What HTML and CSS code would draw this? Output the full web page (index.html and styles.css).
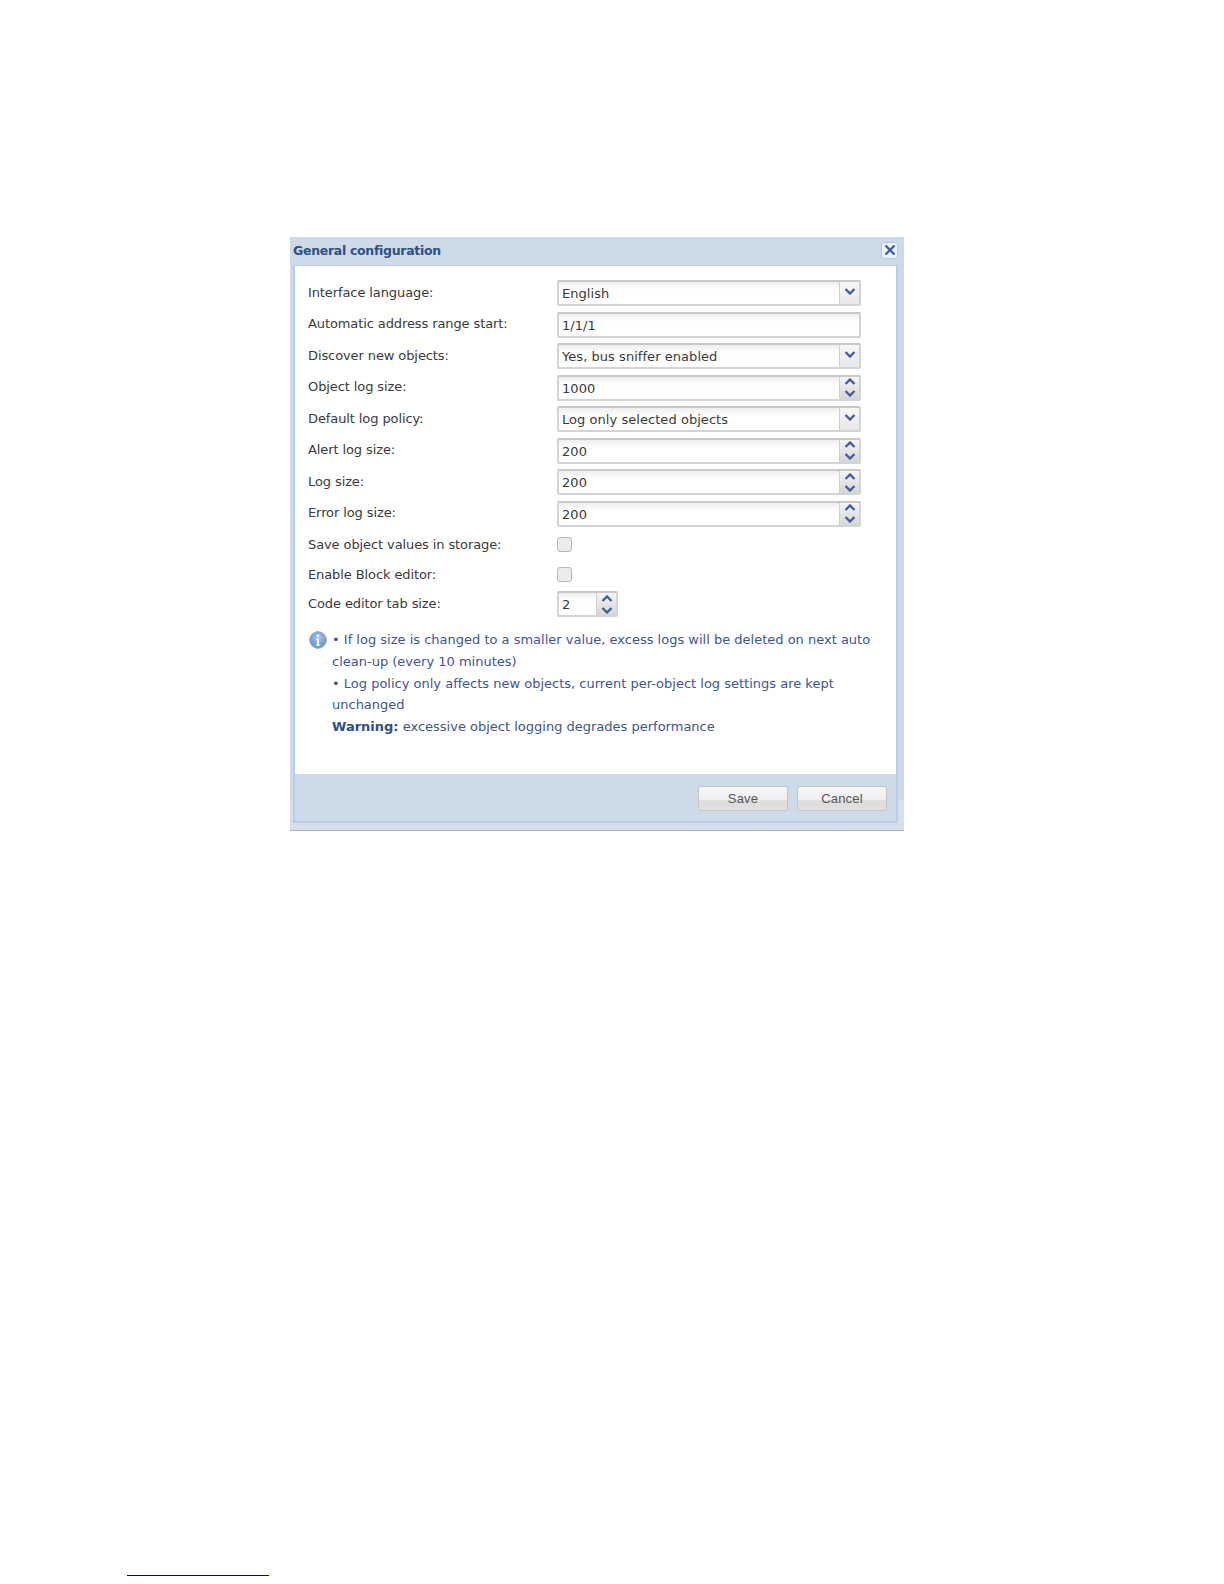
FILE: index.html
```html
<!DOCTYPE html>
<html lang="en">
<head>
    <meta charset="UTF-8">
    <title>General configuration</title>
    <link rel="stylesheet" href="styles.css">
</head>
<body>
    <div class="dialog">
        <div class="dialog-header">
            <span class="dialog-title">General configuration</span>
            <button class="close-btn">
                <svg width="12" height="12" viewBox="0 0 12 12"><path class="chev" d="M1.5 1.5L10.5 10.5M10.5 1.5L1.5 10.5"/></svg>
            </button>
        </div>
        <div class="dialog-inner">
            <div class="dialog-body">
                <div class="form-row">
                    <label>Interface language:</label>
                    <div class="field">
                        <span class="field-value">English</span>
                        <span class="trigger"><svg width="12" height="7" viewBox="0 0 12 7"><path class="chev" d="M1.5 1L6 5.5L10.5 1"/></svg></span>
                    </div>
                </div>
                <div class="form-row">
                    <label>Automatic address range start:</label>
                    <div class="field"><span class="field-value">1/1/1</span></div>
                </div>
                <div class="form-row">
                    <label>Discover new objects:</label>
                    <div class="field">
                        <span class="field-value">Yes, bus sniffer enabled</span>
                        <span class="trigger"><svg width="12" height="7" viewBox="0 0 12 7"><path class="chev" d="M1.5 1L6 5.5L10.5 1"/></svg></span>
                    </div>
                </div>
                <div class="form-row">
                    <label>Object log size:</label>
                    <div class="field">
                        <span class="field-value">1000</span>
                        <span class="spinner">
                            <svg width="12" height="7" viewBox="0 0 12 7"><path class="chev" d="M1.5 6L6 1.5L10.5 6"/></svg>
                            <svg width="12" height="7" viewBox="0 0 12 7"><path class="chev" d="M1.5 1L6 5.5L10.5 1"/></svg>
                        </span>
                    </div>
                </div>
                <div class="form-row">
                    <label>Default log policy:</label>
                    <div class="field">
                        <span class="field-value">Log only selected objects</span>
                        <span class="trigger"><svg width="12" height="7" viewBox="0 0 12 7"><path class="chev" d="M1.5 1L6 5.5L10.5 1"/></svg></span>
                    </div>
                </div>
                <div class="form-row">
                    <label>Alert log size:</label>
                    <div class="field">
                        <span class="field-value">200</span>
                        <span class="spinner">
                            <svg width="12" height="7" viewBox="0 0 12 7"><path class="chev" d="M1.5 6L6 1.5L10.5 6"/></svg>
                            <svg width="12" height="7" viewBox="0 0 12 7"><path class="chev" d="M1.5 1L6 5.5L10.5 1"/></svg>
                        </span>
                    </div>
                </div>
                <div class="form-row">
                    <label>Log size:</label>
                    <div class="field">
                        <span class="field-value">200</span>
                        <span class="spinner">
                            <svg width="12" height="7" viewBox="0 0 12 7"><path class="chev" d="M1.5 6L6 1.5L10.5 6"/></svg>
                            <svg width="12" height="7" viewBox="0 0 12 7"><path class="chev" d="M1.5 1L6 5.5L10.5 1"/></svg>
                        </span>
                    </div>
                </div>
                <div class="form-row">
                    <label>Error log size:</label>
                    <div class="field">
                        <span class="field-value">200</span>
                        <span class="spinner">
                            <svg width="12" height="7" viewBox="0 0 12 7"><path class="chev" d="M1.5 6L6 1.5L10.5 6"/></svg>
                            <svg width="12" height="7" viewBox="0 0 12 7"><path class="chev" d="M1.5 1L6 5.5L10.5 1"/></svg>
                        </span>
                    </div>
                </div>
                <div class="form-row check-row">
                    <label>Save object values in storage:</label>
                    <span class="checkbox"></span>
                </div>
                <div class="form-row check-row">
                    <label>Enable Block editor:</label>
                    <span class="checkbox"></span>
                </div>
                <div class="form-row">
                    <label>Code editor tab size:</label>
                    <div class="field field-small">
                        <span class="field-value">2</span>
                        <span class="spinner">
                            <svg width="12" height="7" viewBox="0 0 12 7"><path class="chev" d="M1.5 6L6 1.5L10.5 6"/></svg>
                            <svg width="12" height="7" viewBox="0 0 12 7"><path class="chev" d="M1.5 1L6 5.5L10.5 1"/></svg>
                        </span>
                    </div>
                </div>
                <div class="info">
                    <svg class="info-icon" width="18" height="18" viewBox="0 0 18 18">
                        <defs>
                            <radialGradient id="info-fill" cx="50%" cy="35%" r="70%">
                                <stop offset="0" stop-color="#a9c6ea"/>
                                <stop offset="1" stop-color="#5f8cc6"/>
                            </radialGradient>
                        </defs>
                        <circle cx="9" cy="9" r="8.3" fill="url(#info-fill)" stroke="#7fa3d2"/>
                        <circle cx="9" cy="4.8" r="1.4" fill="#fff"/>
                        <path d="M7 7.5h3v6h1.2v1.2H6.8v-1.2H8V8.7H7z" fill="#fff"/>
                    </svg>
                    <div class="info-text">
                        • If log size is changed to a smaller value, excess logs will be deleted on next auto clean-up (every 10 minutes)<br>
                        • Log policy only affects new objects, current per-object log settings are kept unchanged<br>
                        <b>Warning:</b> excessive object logging degrades performance
                    </div>
                </div>
            </div>
            <div class="dialog-footer">
                <button class="btn">Save</button>
                <button class="btn">Cancel</button>
            </div>
        </div>
    </div>
    <div class="footnote-rule"></div>
</body>
</html>
```

FILE: styles.css
```css
* {
    margin: 0;
    padding: 0;
    box-sizing: border-box;
}

body {
    height: 1584px;
    background: white;
    font-family: "DejaVu Sans", sans-serif;
    color: #333;
    padding-top: 237px;
    position: relative;
    overflow: hidden;
}

.dialog {
    width: 614px;
    height: 594px;
    margin-left: 290px;
    background: linear-gradient(#cddbe9 95%, #d6e0ec 95%);
    border-bottom: 1px solid #a9b5c2;
    padding: 0 6px 7px 3px;
    display: flex;
    flex-direction: column;
}

.dialog-header {
    height: 28px;
    flex-shrink: 0;
    display: flex;
    justify-content: space-between;
    align-items: center;
    padding-bottom: 2px;
}

.dialog-title {
    font-size: 12.5px;
    font-weight: bold;
    letter-spacing: -0.3px;
    color: #2f4f86;
}

.close-btn {
    width: 17px;
    height: 17px;
    background: #e9f0fa;
    border: 1px solid #b4c9e8;
    border-radius: 3px;
    display: flex;
    align-items: center;
    justify-content: center;
}

.chev {
    fill: none;
    stroke: #3f5b9b;
    stroke-width: 2.3;
}

.dialog-inner {
    flex: 1;
    display: flex;
    flex-direction: column;
    border: 2px solid #bccbea;
    border-top-width: 1px;
}

.dialog-body {
    flex: 1;
    background: white;
    padding: 14px 12px 0 13px;
}

.form-row {
    height: 26px;
    margin-bottom: 5.5px;
    display: flex;
    align-items: center;
}

.form-row label {
    width: 249px;
    font-size: 13px;
    letter-spacing: -0.1px;
    color: #3a3a3a;
    padding-bottom: 2px;
}

.field {
    width: 304px;
    height: 26px;
    display: flex;
    background: linear-gradient(#eeeeee, #ffffff 35%);
    border: 2px solid #d4d4d4;
    border-top-color: #c8c8c8;
    border-radius: 2px;
}

.field-small {
    width: 61px;
}

.field-value {
    flex: 1;
    font-size: 13px;
    letter-spacing: 0.05px;
    line-height: 23px;
    padding-left: 3px;
    color: #3a3a3a;
}

.trigger,
.spinner {
    width: 20px;
    border-left: 1px solid #cfcfcf;
    display: flex;
    flex-direction: column;
    align-items: center;
    justify-content: center;
}

.trigger {
    background: linear-gradient(#f7f7f7, #e8e8e8);
    padding-bottom: 3px;
}

.spinner {
    background: linear-gradient(#f4f4f4, #d6d6d6);
    gap: 5px;
}

.check-row {
    height: 25px;
    margin-bottom: 4.5px;
}

.check-row label {
    padding-bottom: 0;
}

.checkbox {
    width: 15px;
    height: 15px;
    background: #ebebeb;
    border: 1px solid #b9b9b9;
    border-radius: 3px;
}

.info {
    display: flex;
    gap: 5px;
    margin-top: 12px;
    margin-left: 1px;
}

.info-icon {
    flex-shrink: 0;
    margin-top: 2px;
}

.info-text {
    font-size: 13px;
    line-height: 21.8px;
    color: #41558f;
    width: 550px;
}

.info-text b {
    color: #2f4f86;
}

.dialog-footer {
    height: 47px;
    flex-shrink: 0;
    background: #cddbe9;
    padding: 12px 9px 0 0;
    display: flex;
    justify-content: flex-end;
    align-items: flex-start;
    gap: 9px;
}

.btn {
    width: 90px;
    height: 25px;
    font-family: "Liberation Sans", sans-serif;
    font-size: 13px;
    letter-spacing: 0.2px;
    color: #555;
    background: linear-gradient(#f8f8f8 0, #eeeeee 58%, #dcdcdc 59%, #e0e0e0 100%);
    border: 1px solid #c4c4c4;
    border-radius: 3px;
}

.footnote-rule {
    position: absolute;
    left: 127px;
    top: 1575px;
    width: 142px;
    height: 1px;
    background: #0000a0;
}
```
